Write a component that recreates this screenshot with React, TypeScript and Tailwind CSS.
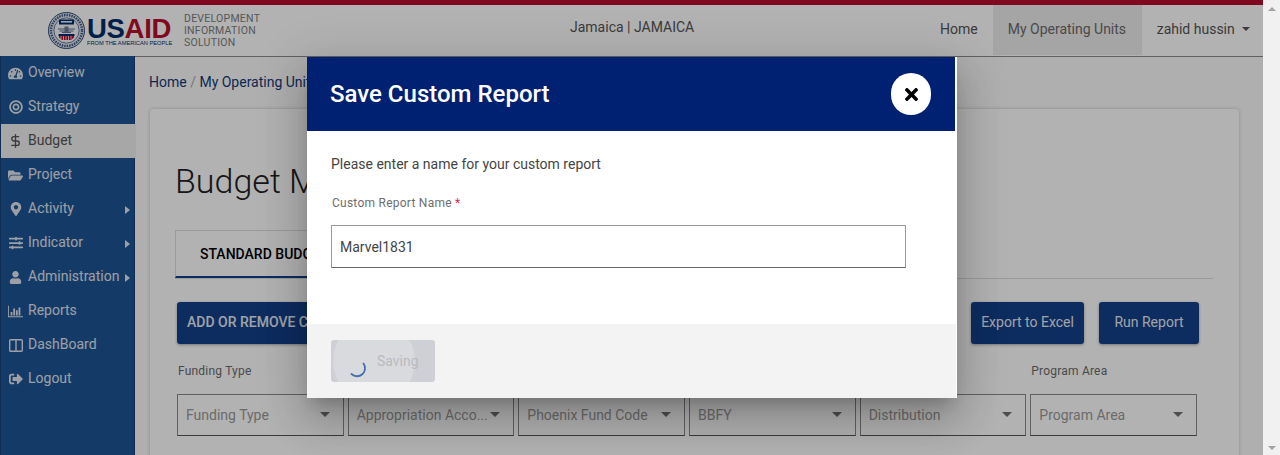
import {
  FaTachometerAlt,
  FaBullseye,
  FaFolderOpen,
  FaMapMarkerAlt,
  FaSlidersH,
  FaUser,
  FaSignOutAlt,
  FaTimes,
} from "react-icons/fa";
import { DollarSign } from "lucide-react";

function ReportsIcon() {
  return (
    <svg width="17" height="13" viewBox="0 0 17 13" fill="currentColor">
      <path d="M0 0h1v12h16v1H0z" />
      <path d="M3 7h2v4H3zM6 3h2v8H6zM9 5h2v6H9zM12 2h2v9h-2z" />
    </svg>
  );
}

function DashBoardIcon() {
  return (
    <svg width="14" height="13" viewBox="0 0 14 13" fill="none" stroke="currentColor" strokeWidth="1.400">
      <rect x="0.700" y="0.700" width="12.600" height="11.600" rx="1" />
      <path d="M7 1v11" />
    </svg>
  );
}

const navItems = [
  { label: "Overview", icon: <FaTachometerAlt className="text-[15px]" /> },
  { label: "Strategy", icon: <FaBullseye className="text-[14px]" /> },
  { label: "Budget", icon: <DollarSign size={16} strokeWidth={2.2} />, active: true },
  { label: "Project", icon: <FaFolderOpen className="text-[15px]" /> },
  { label: "Activity", icon: <FaMapMarkerAlt className="text-[14px]" />, more: true },
  { label: "Indicator", icon: <FaSlidersH className="text-[14px]" />, more: true },
  { label: "Administration", icon: <FaUser className="text-[13px]" />, more: true },
  { label: "Reports", icon: <ReportsIcon /> },
  { label: "DashBoard", icon: <DashBoardIcon /> },
  { label: "Logout", icon: <FaSignOutAlt className="text-[14px]" /> },
];

const filters = [
  { label: "Funding Type", value: "Funding Type" },
  { label: "", value: "Appropriation Acco..." },
  { label: "", value: "Phoenix Fund Code" },
  { label: "", value: "BBFY" },
  { label: "", value: "Distribution" },
  { label: "Program Area", value: "Program Area" },
];

function Seal() {
  return (
    <svg width="37" height="37" viewBox="0 0 37 37" className="shrink-0">
      <circle cx="18.5" cy="18.5" r="18" fill="#dfe3ea" stroke="#2d4a78" strokeWidth="1" />
      <circle cx="18.5" cy="18.5" r="15.5" fill="none" stroke="#3d5a88" strokeWidth="2.4" strokeDasharray="1.5 1" />
      <circle cx="18.5" cy="18.5" r="12.6" fill="#f6f7f9" stroke="#2d4a78" strokeWidth="0.7" />
      <rect x="11" y="7.5" width="15" height="5" fill="#002f6c" />
      <rect x="13" y="9" width="11" height="1.6" fill="#e7ebf2" />
      <path d="M10 17h17M11.500 19h14M14 20.500h9" stroke="#5d7394" strokeWidth="1" />
      <rect x="16.5" y="14.5" width="4" height="6" fill="#6d7f99" />
      <rect x="10.5" y="22" width="16" height="2" fill="#002f6c" />
      <path d="M11 24h15v1.5l-3 2.500h-9l-3-2.500z" fill="#ba0c2f" />
      <path d="M13 24v3.500M15.500 24v4M18 24v4M20.500 24v4M23 24v3.500" stroke="#f6f7f9" strokeWidth="0.8" />
    </svg>
  );
}

function Header() {
  return (
    <div className="flex h-[52px] shrink-0 items-stretch border-b border-[#8c8c8c] bg-white">
      <div className="ml-12 flex w-[522px] shrink-0 items-center">
        <Seal />
        <div className="ml-[2px] flex w-[85px] shrink-0 flex-col pt-[3px]">
          <span className="font-['Liberation_Sans',sans-serif] text-[27.500px] leading-[23px] font-bold tracking-[-0.3px] text-[#002f6c]">
            US<span className="text-[#ba0c2f]">AID</span>
          </span>
          <span className="font-['Liberation_Sans',sans-serif] text-[5.700px] leading-[7px] whitespace-nowrap text-[#002f6c]">
            FROM THE AMERICAN PEOPLE
          </span>
        </div>
        <div className="ml-3 text-[10.500px] leading-3 tracking-[0.25px] text-[#7d7d7d]">
          DEVELOPMENT
          <br />
          INFORMATION
          <br />
          SOLUTION
        </div>
      </div>
      <div className="flex w-[355px] shrink-0 items-center pb-[7px] text-sm text-[#555]">Jamaica | JAMAICA</div>
      <div className="flex shrink-0 items-stretch pb-px text-sm whitespace-nowrap text-[#555]">
        <span className="flex items-center px-[15px] pb-[2px]">Home</span>
        <span className="flex w-[149px] items-center bg-[#ededed] pb-[2px] pl-[15px] text-[#6b6b6b]">My Operating Units</span>
        <span className="flex items-center gap-[7px] pb-[2px] pl-[15px]">
          zahid hussin
          <span className="h-0 w-0 shrink-0 border-x-[4px] border-t-[4px] border-x-transparent border-t-[#555]" />
        </span>
      </div>
    </div>
  );
}

function Sidebar() {
  return (
    <div className="relative -mt-px w-[135px] shrink-0 border-x border-[#17437a] bg-[#1e5495]">
      {navItems.map((item) => (
        <div
          key={item.label}
          className={
            item.active
              ? "relative flex h-[34px] w-[135px] items-center bg-[#f0f0f0] text-sm text-[#555]"
              : "relative flex h-[34px] items-center text-sm text-[#e0e6ee]"
          }
        >
          <span className="mr-[5px] ml-[7px] flex w-[15px] shrink-0 justify-center">{item.icon}</span>
          <span className="pb-[3px]">{item.label}</span>
          {item.more && (
            <span className="absolute top-[14px] left-[124px] h-0 w-0 border-y-[4px] border-l-[5px] border-y-transparent border-l-[#e0e6ee]" />
          )}
        </div>
      ))}
    </div>
  );
}

function Content() {
  return (
    <div className="min-w-0 flex-1 bg-[#fbfbfb] pt-[15px] pl-[14px]">
      <div className="text-sm leading-[20px] text-[#123a75]">
        Home <span className="text-[#aaa]">/</span> My Operating Units
      </div>
      <div className="mt-[17px] ml-[1px] h-[400px] w-[1089px] rounded-sm bg-white pt-[47px] pl-[25px] shadow-[0_0_4px_rgba(0,0,0,0.2)]">
        <h1 className="text-[34px] leading-[50px] font-light text-[#222]">Budget Management</h1>
        <div className="mt-[24px] h-[49px] w-[1038px] border-b border-[#ddd]">
          <div className="flex h-[48px] w-[260px] items-center border border-b-2 border-[#ddd] border-b-[#144088] pl-6 text-sm font-medium text-black">
            STANDARD BUDGET REPORT
          </div>
        </div>
        <div className="mt-[23px] ml-[2px] flex h-[42px] w-[1022px] items-stretch text-sm">
          <button className="rounded-[3px] bg-[#144088] px-[10px] pb-[2px] font-medium text-[#e6eaf2] shadow-[0_1px_3px_rgba(0,0,0,0.35)]">
            ADD OR REMOVE COLUMNS
          </button>
          <button className="ml-auto w-[113px] rounded-[3px] bg-[#144088] pb-[2px] text-[#e6eaf2] shadow-[0_1px_3px_rgba(0,0,0,0.35)]">
            Export to Excel
          </button>
          <button className="ml-[15px] w-[100px] rounded-[3px] bg-[#144088] pb-[2px] text-[#e6eaf2] shadow-[0_1px_3px_rgba(0,0,0,0.35)]">
            Run Report
          </button>
        </div>
        <div className="mt-[18px] ml-[2px] grid w-[1020px] grid-cols-6 gap-x-1">
          {filters.map((f) => (
            <div key={f.value}>
              <div className="h-[32px] pl-[1px] text-xs leading-[18px] tracking-[0.2px] text-[#6b6b6b]">{f.label}</div>
              <div className="flex h-[42px] items-center justify-between border border-[#8c8c8c] border-b-[#555] pr-[13px] pb-[1px] pl-2 text-sm whitespace-nowrap text-[#9a9a9a]">
                {f.value}
                <span className="h-0 w-0 shrink-0 border-x-[5px] border-t-[5px] border-x-transparent border-t-[#707070]" />
              </div>
            </div>
          ))}
        </div>
      </div>
    </div>
  );
}

function SaveModal() {
  return (
    <div className="absolute top-[57px] left-[307px] flex h-[341px] w-[650px] flex-col bg-white shadow-[0_11px_15px_-7px_rgba(0,0,0,0.2),0_24px_38px_3px_rgba(0,0,0,0.14),0_9px_46px_8px_rgba(0,0,0,0.12)]">
      <div className="flex h-[74px] w-[648px] shrink-0 items-center justify-between bg-[#002171] pr-[24px] pl-[23px]">
        <h2 className="text-2xl font-medium text-white">Save Custom Report</h2>
        <div className="flex h-[42px] w-10 items-center justify-center rounded-full bg-white text-black">
          <FaTimes className="text-[19px]" />
        </div>
      </div>
      <div className="flex-1 px-[24px] pt-[23px]">
        <p className="text-sm leading-5 text-[#444]">Please enter a name for your custom report</p>
        <div className="mt-[20px] pl-[1px] text-xs leading-[18px] tracking-[0.25px] text-[#6e6e6e]">
          Custom Report Name <span className="text-[#d32f4b]">*</span>
        </div>
        <div className="mt-[13px] flex h-[43px] w-[575px] items-center border border-[#999] border-b-[#666] pl-2 text-sm text-[#444]">
          Marvel1831
        </div>
      </div>
      <div className="h-[74px] w-[649px] shrink-0 bg-[#f3f3f3] pt-4 pl-[24px]">
        <div className="relative flex h-[42px] w-[104px] items-center overflow-hidden rounded-[3px] bg-[#ced0d5] text-sm text-[#b9bbc1]">
          <span className="absolute top-[-20px] left-[2px] h-[82px] w-[82px] rounded-full bg-[#d9dade]" />
          <svg width="24" height="24" viewBox="0 0 24 24" className="absolute top-[16px] left-[14px]">
            <path d="M18.500 7.500A8 8 0 0 1 6.500 18" fill="none" stroke="#4570ad" strokeWidth="1.800" strokeLinecap="round" />
          </svg>
          <span className="relative ml-[46px]">Saving</span>
        </div>
      </div>
    </div>
  );
}

function Scrollbar() {
  return (
    <div className="flex w-[17px] shrink-0 flex-col items-center justify-between bg-[#f1f1f1] pt-[7px] pb-[5px]">
      <span className="h-0 w-0 border-x-[4px] border-b-[4px] border-x-transparent border-b-[#a3a3a3]" />
      <span className="h-0 w-0 border-x-[4px] border-t-[4px] border-x-transparent border-t-[#a3a3a3]" />
    </div>
  );
}

export default function App() {
  return (
    <div className="flex h-[455px] w-[1280px] overflow-hidden font-['Roboto',sans-serif]">
      <div className="relative flex min-w-0 flex-1 flex-col">
        <div className="h-[5px] shrink-0 bg-[#ba0c2f]" />
        <Header />
        <div className="flex min-h-0 flex-1">
          <Sidebar />
          <Content />
        </div>
        <div className="absolute inset-0 bg-black/30" />
        <SaveModal />
      </div>
      <Scrollbar />
    </div>
  );
}
